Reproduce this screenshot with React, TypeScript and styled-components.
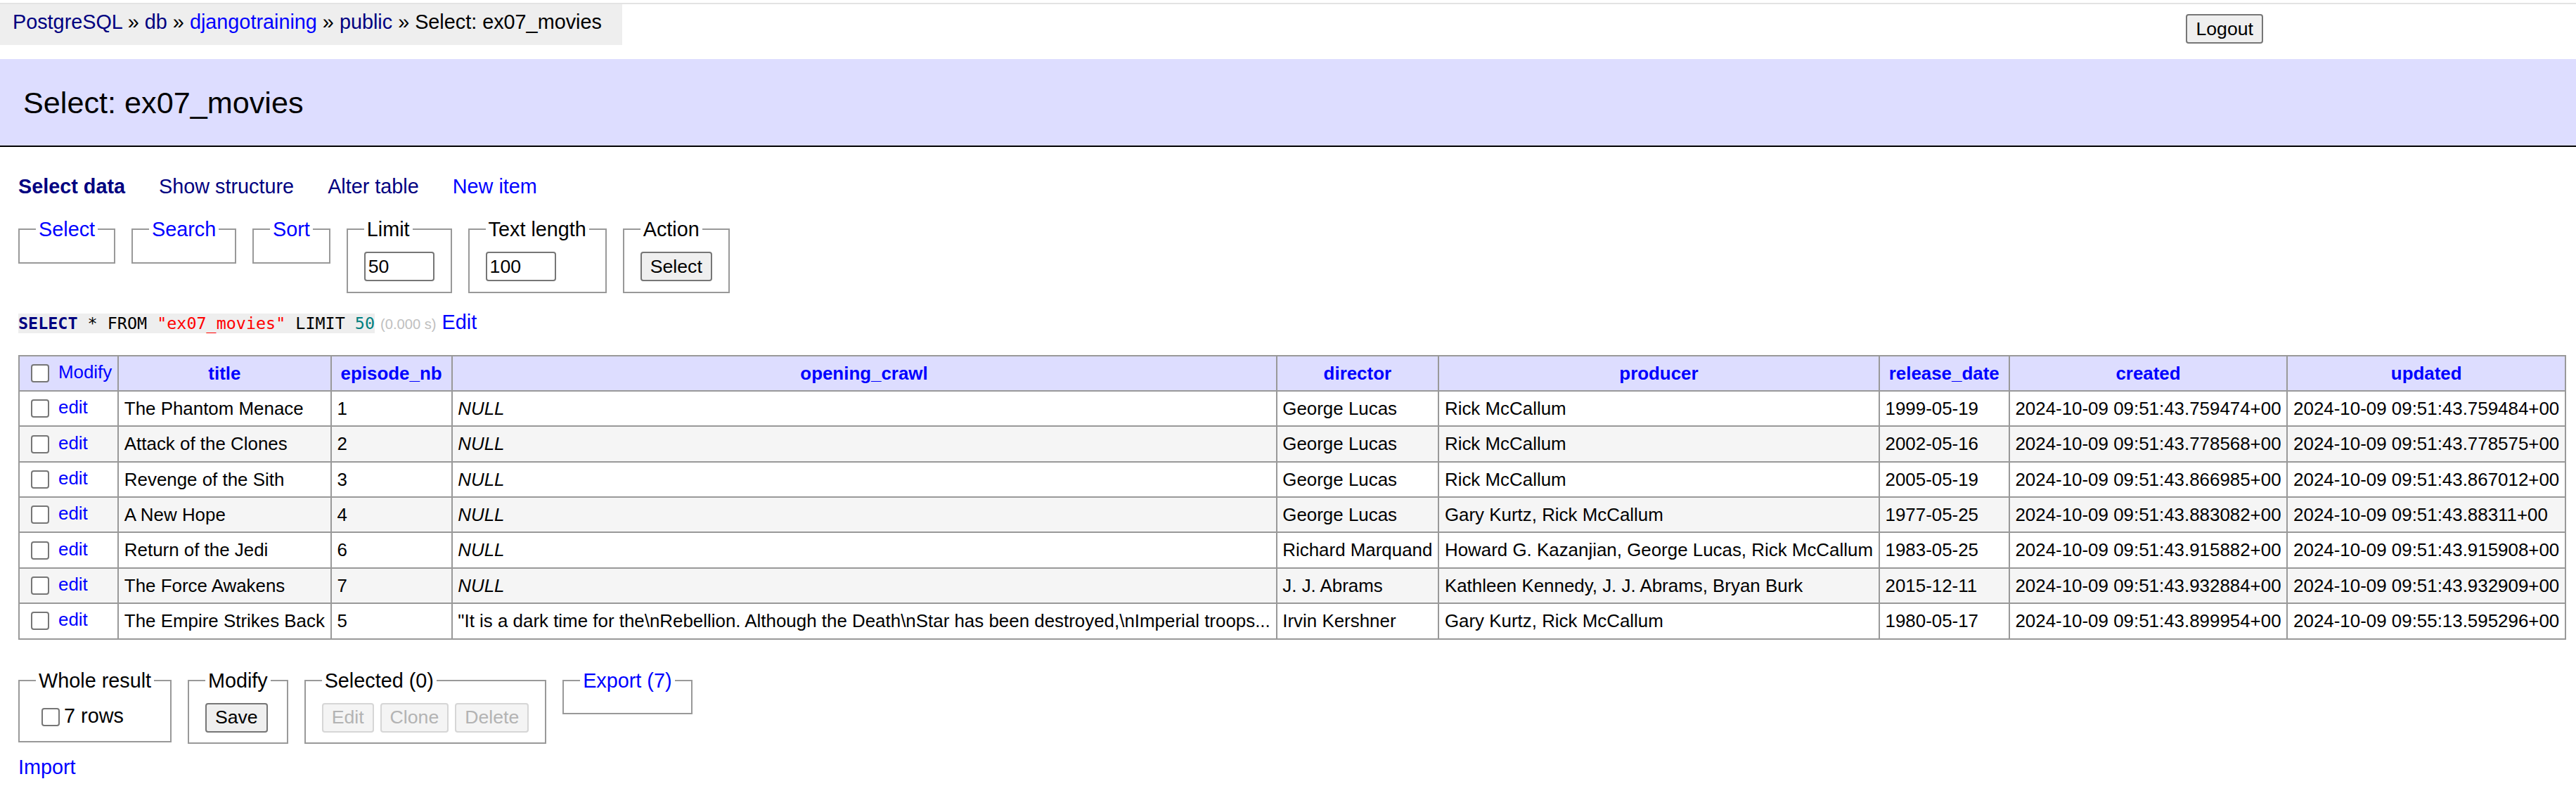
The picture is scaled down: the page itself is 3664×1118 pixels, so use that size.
import styled, { createGlobalStyle } from "styled-components";

type Movie = {
  title: string;
  episode: string;
  crawl: string | null;
  director: string;
  producer: string;
  release: string;
  created: string;
  updated: string;
};

const movies: Movie[] = [
  {
    title: "The Phantom Menace",
    episode: "1",
    crawl: null,
    director: "George Lucas",
    producer: "Rick McCallum",
    release: "1999-05-19",
    created: "2024-10-09 09:51:43.759474+00",
    updated: "2024-10-09 09:51:43.759484+00",
  },
  {
    title: "Attack of the Clones",
    episode: "2",
    crawl: null,
    director: "George Lucas",
    producer: "Rick McCallum",
    release: "2002-05-16",
    created: "2024-10-09 09:51:43.778568+00",
    updated: "2024-10-09 09:51:43.778575+00",
  },
  {
    title: "Revenge of the Sith",
    episode: "3",
    crawl: null,
    director: "George Lucas",
    producer: "Rick McCallum",
    release: "2005-05-19",
    created: "2024-10-09 09:51:43.866985+00",
    updated: "2024-10-09 09:51:43.867012+00",
  },
  {
    title: "A New Hope",
    episode: "4",
    crawl: null,
    director: "George Lucas",
    producer: "Gary Kurtz, Rick McCallum",
    release: "1977-05-25",
    created: "2024-10-09 09:51:43.883082+00",
    updated: "2024-10-09 09:51:43.88311+00",
  },
  {
    title: "Return of the Jedi",
    episode: "6",
    crawl: null,
    director: "Richard Marquand",
    producer: "Howard G. Kazanjian, George Lucas, Rick McCallum",
    release: "1983-05-25",
    created: "2024-10-09 09:51:43.915882+00",
    updated: "2024-10-09 09:51:43.915908+00",
  },
  {
    title: "The Force Awakens",
    episode: "7",
    crawl: null,
    director: "J. J. Abrams",
    producer: "Kathleen Kennedy, J. J. Abrams, Bryan Burk",
    release: "2015-12-11",
    created: "2024-10-09 09:51:43.932884+00",
    updated: "2024-10-09 09:51:43.932909+00",
  },
  {
    title: "The Empire Strikes Back",
    episode: "5",
    crawl:
      '"It is a dark time for the\\nRebellion. Although the Death\\nStar has been destroyed,\\nImperial troops...',
    director: "Irvin Kershner",
    producer: "Gary Kurtz, Rick McCallum",
    release: "1980-05-17",
    created: "2024-10-09 09:51:43.899954+00",
    updated: "2024-10-09 09:55:13.595296+00",
  },
];

const columns = [
  "title",
  "episode_nb",
  "opening_crawl",
  "director",
  "producer",
  "release_date",
  "created",
  "updated",
];

export default function App() {
  return (
    <>
      <GlobalStyle />
      <TopStrip />
      <Header>
        <Breadcrumb>
          <Crumb $visited>PostgreSQL</Crumb> » <Crumb $visited>db</Crumb> »{" "}
          <Crumb>djangotraining</Crumb> » <Crumb $visited>public</Crumb> » Select: ex07_movies
        </Breadcrumb>
        <LogoutButton>Logout</LogoutButton>
      </Header>

      <Content>
        <Title>Select: ex07_movies</Title>

        <Body>
          <NavLinks>
            <NavLink $visited $active>
              Select data
            </NavLink>
            <NavLink $visited>Show structure</NavLink>
            <NavLink $visited>Alter table</NavLink>
            <NavLink>New item</NavLink>
          </NavLinks>

          <FieldsetRow>
            <Fieldset>
              <Legend>
                <LegendLink>Select</LegendLink>
              </Legend>
            </Fieldset>
            <Fieldset>
              <Legend>
                <LegendLink>Search</LegendLink>
              </Legend>
            </Fieldset>
            <Fieldset>
              <Legend>
                <LegendLink>Sort</LegendLink>
              </Legend>
            </Fieldset>
            <Fieldset>
              <Legend>Limit</Legend>
              <SizeInput defaultValue="50" />
            </Fieldset>
            <Fieldset>
              <Legend>Text length</Legend>
              <SizeInput defaultValue="100" />
            </Fieldset>
            <Fieldset>
              <Legend>Action</Legend>
              <Button>Select</Button>
            </Fieldset>
          </FieldsetRow>

          <Query>
            <Code>
              <Keyword>SELECT</Keyword> * FROM <Str>"ex07_movies"</Str> LIMIT <Num>50</Num>
            </Code>{" "}
            <Time>(0.000 s)</Time> <PlainLink>Edit</PlainLink>
          </Query>

          <DataTable>
            <thead>
              <tr>
                <HeadCell>
                  <Check />
                  {" "}
                  <PlainLink>Modify</PlainLink>
                </HeadCell>
                {columns.map((c) => (
                  <HeadTh key={c}>
                    <PlainLink>{c}</PlainLink>
                  </HeadTh>
                ))}
              </tr>
            </thead>
            <tbody>
              {movies.map((m, i) => (
                <Row key={m.title} $odd={i % 2 === 1}>
                  <Cell>
                    <Check /> <PlainLink>edit</PlainLink>
                  </Cell>
                  <Cell>{m.title}</Cell>
                  <Cell>{m.episode}</Cell>
                  <Cell>{m.crawl === null ? <i>NULL</i> : m.crawl}</Cell>
                  <Cell>{m.director}</Cell>
                  <Cell>{m.producer}</Cell>
                  <Cell>{m.release}</Cell>
                  <Cell>{m.created}</Cell>
                  <Cell>{m.updated}</Cell>
                </Row>
              ))}
            </tbody>
          </DataTable>

          <Footer>
            <Fieldset>
              <Legend>Whole result</Legend>
              <label>
                <Check />7 rows
              </label>
            </Fieldset>
            <Fieldset>
              <Legend>Modify</Legend>
              <Button>Save</Button>
            </Fieldset>
            <Fieldset>
              <Legend>Selected (0)</Legend>
              <ButtonGroup>
                <Button disabled>Edit</Button>
                <Button disabled>Clone</Button>
                <Button disabled>Delete</Button>
              </ButtonGroup>
            </Fieldset>
            <Fieldset>
              <Legend>
                <LegendLink>Export (7)</LegendLink>
              </Legend>
            </Fieldset>
          </Footer>

          <ImportLink>Import</ImportLink>
        </Body>
      </Content>
    </>
  );
}

const GlobalStyle = createGlobalStyle`
  body {
    margin: 0;
    background: #fff;
    color: #000;
    font: 28.8px/1.25 "Liberation Sans", Arial, Helvetica, sans-serif;
    overflow-x: hidden;
  }
  label {
    cursor: default;
  }
`;

const TopStrip = styled.div`
  height: 4px;
  border-bottom: 2px solid #e3e3e3;
`;

const Header = styled.div`
  display: flex;
  align-items: flex-start;
  padding-right: 445px;
`;

const Breadcrumb = styled.div`
  background: #eee;
  height: 57.6px;
  line-height: 51.84px;
  padding: 0 28.8px 0 18px;
  white-space: nowrap;
`;

const Crumb = styled.a<{ $visited?: boolean }>`
  color: ${({ $visited }) => ($visited ? "navy" : "blue")};
  text-decoration: none;
`;

const Button = styled.button`
  box-sizing: border-box;
  height: 42px;
  padding: 2px 12px;
  font: 26.67px "Liberation Sans", Arial, sans-serif;
  color: #000;
  background: #efefef;
  border: 2px solid #767676;
  border-radius: 4px;
  vertical-align: middle;

  &:disabled {
    color: #b3b3b3;
    background: #f4f4f4;
    border-color: #d6d6d6;
  }
`;

const LogoutButton = styled(Button)`
  margin-left: auto;
  margin-top: 14.4px;
`;

const Content = styled.div`
  padding-top: 20.4px;
`;

const Title = styled.h2`
  margin: 0 0 38px;
  padding: 34.56px 33px;
  font-size: 43.2px;
  line-height: 54px;
  font-weight: normal;
  background: #ddf;
  border-bottom: 2px solid #000;
`;

const Body = styled.div`
  padding-left: 26px;
`;

const NavLinks = styled.p`
  display: flex;
  gap: 48px;
  margin: 0;
  line-height: 36px;
`;

const NavLink = styled.a<{ $visited?: boolean; $active?: boolean }>`
  color: ${({ $visited }) => ($visited ? "navy" : "blue")};
  font-weight: ${({ $active }) => ($active ? "bold" : "normal")};
  text-decoration: none;
  white-space: nowrap;
`;

const FieldsetRow = styled.div`
  display: flex;
  align-items: flex-start;
  gap: 22.8px;
  margin-top: 25px;
`;

const Fieldset = styled.fieldset`
  margin: 0;
  min-width: 0;
  padding: 14.4px 23.04px;
  border: 2px solid #999;
  line-height: 36px;
`;

const Legend = styled.legend`
  padding: 0 4px;
  line-height: 36px;
`;

const LegendLink = styled.a`
  color: blue;
  text-decoration: none;
`;

const SizeInput = styled.input`
  box-sizing: border-box;
  display: block;
  width: 100px;
  height: 42px;
  padding: 2px 4px;
  font: 26.67px "Liberation Sans", Arial, sans-serif;
  border: 2px solid #767676;
  border-radius: 4px;
`;

const Query = styled.p`
  margin: 23px 0 0;
  line-height: 36px;
`;

const Code = styled.code`
  font-family: "DejaVu Sans Mono", monospace;
  font-size: 23.4px;
  background: #eee;
`;

const Keyword = styled.a`
  color: navy;
  font-weight: bold;
  text-decoration: none;
`;

const Str = styled.span`
  color: red;
`;

const Num = styled.span`
  color: #007f7f;
`;

const Time = styled.span`
  color: silver;
  font-size: 20.16px;
`;

const PlainLink = styled.a`
  color: blue;
  text-decoration: none;
`;

const DataTable = styled.table`
  margin-top: 25.92px;
  border-collapse: collapse;
  font-size: 25.92px;
  line-height: 32.4px;
  white-space: nowrap;
`;

const Cell = styled.td`
  border: 2px solid #999;
  padding: 5.18px 7.78px;
  text-align: left;
`;

const HeadCell = styled(Cell)`
  background: #ddf;
`;

const HeadTh = styled.th`
  border: 2px solid #999;
  padding: 5.18px 12.96px;
  background: #ddf;
  text-align: center;
  font-weight: bold;
`;

const Row = styled.tr<{ $odd: boolean }>`
  background: ${({ $odd }) => ($odd ? "#f5f5f5" : "#fff")};
`;

const Check = styled.input.attrs({ type: "checkbox" })`
  appearance: none;
  box-sizing: border-box;
  width: 26px;
  height: 26px;
  margin: 6px 6px 6px 8px;
  border: 2px solid #767676;
  border-radius: 4px;
  background: #fff;
  vertical-align: middle;
`;

const Footer = styled.div`
  display: flex;
  align-items: flex-start;
  gap: 22.8px;
  padding: 40px 0 14.4px;
`;

const ButtonGroup = styled.div`
  display: flex;
  gap: 9px;
`;

const ImportLink = styled.a`
  display: block;
  width: max-content;
  line-height: 36px;
  color: blue;
  text-decoration: none;
`;
